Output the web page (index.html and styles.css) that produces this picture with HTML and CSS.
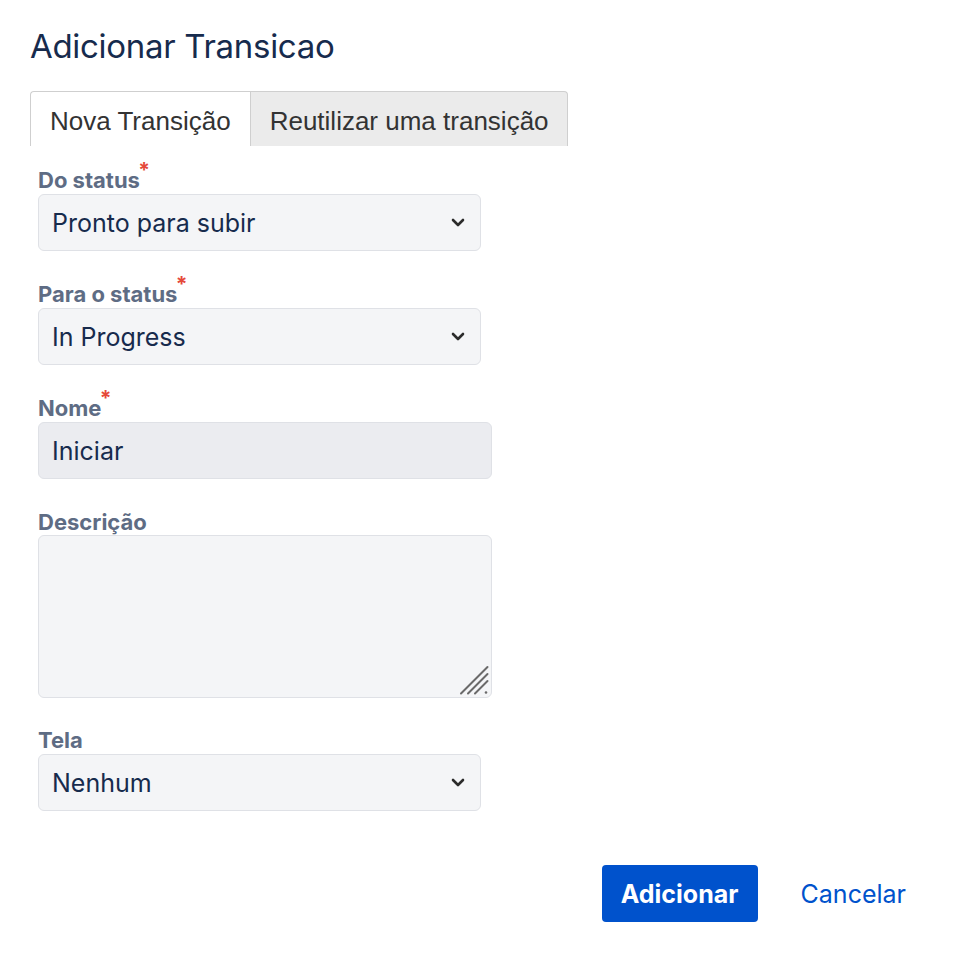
FILE: index.html
```html
<!DOCTYPE html>
<html lang="pt">
<head>
<meta charset="utf-8">
<title>Adicionar Transicao</title>
<link rel="stylesheet" href="styles.css">
</head>
<body>
<div class="dialog">
  <h1 class="title">Adicionar Transicao</h1>
  <div class="tabs">
    <div class="tab active">Nova Transição</div>
    <div class="tab">Reutilizar uma transição</div>
  </div>
  <form class="form">
    <div class="field">
      <label class="label">Do status<span class="req">*</span></label>
      <div class="select-wrap">
        <select class="control select"><option>Pronto para subir</option></select>
        <svg class="chev" width="14" height="9" viewBox="0 0 14 9"><path d="M2 2l5 5 5-5" fill="none" stroke="#2b2b2b" stroke-width="2.6" stroke-linecap="round" stroke-linejoin="round"/></svg>
      </div>
    </div>
    <div class="field">
      <label class="label">Para o status<span class="req">*</span></label>
      <div class="select-wrap">
        <select class="control select"><option>In Progress</option></select>
        <svg class="chev" width="14" height="9" viewBox="0 0 14 9"><path d="M2 2l5 5 5-5" fill="none" stroke="#2b2b2b" stroke-width="2.6" stroke-linecap="round" stroke-linejoin="round"/></svg>
      </div>
    </div>
    <div class="field">
      <label class="label">Nome<span class="req">*</span></label>
      <input class="control input" type="text" value="Iniciar">
    </div>
    <div class="field field-area">
      <label class="label">Descrição</label>
      <div class="textarea-wrap">
        <textarea class="control textarea"></textarea>
        <svg class="grip" width="30" height="30" viewBox="0 0 30 30"><path d="M2 28.5L28.5 2M9 28.5L28.5 9M16 28.5L28.5 16" fill="none" stroke="#6a6a6a" stroke-width="2" stroke-linecap="round"/><circle cx="27" cy="27.5" r="1.3" fill="#6a6a6a"/></svg>
      </div>
    </div>
    <div class="field">
      <label class="label">Tela</label>
      <div class="select-wrap">
        <select class="control select"><option>Nenhum</option></select>
        <svg class="chev" width="14" height="9" viewBox="0 0 14 9"><path d="M2 2l5 5 5-5" fill="none" stroke="#2b2b2b" stroke-width="2.6" stroke-linecap="round" stroke-linejoin="round"/></svg>
      </div>
    </div>
    <div class="footer">
      <button type="button" class="btn primary">Adicionar</button>
      <button type="button" class="btn link">Cancelar</button>
    </div>
  </form>
</div>
</body>
</html>
```
FILE: styles.css
```css
* { box-sizing: border-box; }
html, body { margin: 0; padding: 0; background: #fff; }
body { font-family: Inter, "Noto Sans", sans-serif; color: #172b4d; }

.dialog { padding: 24px 48px 0 30px; }

.title {
  margin: 0;
  font-size: 33px;
  line-height: 44px;
  font-weight: 400;
  color: #172b4d;
  letter-spacing: -0.3px;
}

.tabs {
  display: flex;
  margin-top: 23px;
  height: 55px;
}
.tab {
  font-family: "Liberation Sans", Arial, sans-serif;
  font-size: 26px;
  color: #333;
  padding: 4px 19px 0;
  display: flex;
  align-items: center;
  border: 1px solid #cfcfcf;
  border-bottom: none;
  border-radius: 4px 4px 0 0;
  background: #ebebeb;
}
.tab.active { background: #fff; border-right: none; border-radius: 4px 0 0 0; }
.tab + .tab { border-radius: 0 4px 0 0; padding-right: 18px; }

.form { padding: 20px 0 0 8px; }

.field { display: flex; flex-direction: column; margin-bottom: 29px; }
.field-area { margin-bottom: 28px; }

.label {
  font-size: 22px;
  line-height: 26px;
  font-weight: 700;
  color: #5e6c84;
  margin-bottom: 2px;
  align-self: flex-start;
  position: relative;
  top: 1px;
}
.req {
  color: #e5493a;
  font-size: 21px;
  position: absolute;
  right: -10px;
  top: -9px;
  font-weight: 700;
}

.control {
  font-family: Inter, "Noto Sans", sans-serif;
  font-size: 25px;
  color: #172b4d;
  border: 1px solid #dfe1e6;
  border-radius: 6px;
  background: #f4f5f7;
  outline: none;
  margin: 0;
}

.select-wrap { position: relative; width: 443px; }
.select {
  appearance: none;
  -webkit-appearance: none;
  width: 100%;
  height: 57px;
  padding: 0 40px 0 13px;
}
.chev { position: absolute; right: 16px; top: 24px; pointer-events: none; }

.input {
  width: 454px;
  height: 57px;
  padding: 0 13px;
  background: #ebecf0;
}

.textarea-wrap { position: relative; width: 454px; margin-top: -1px; }
.textarea {
  display: block;
  width: 100%;
  height: 163px;
  resize: none;
  padding: 10px 13px;
}
.grip { position: absolute; right: 3px; bottom: 3px; pointer-events: none; }

.footer {
  display: flex;
  justify-content: flex-end;
  align-items: center;
  gap: 28px;
  margin-top: 54px;
}
.btn {
  font-family: Inter, "Noto Sans", sans-serif;
  font-size: 25px;
  height: 57px;
  border: none;
  cursor: pointer;
  background: none;
  padding: 0 16px;
}
.btn.primary {
  background: #0052cc;
  color: #fff;
  font-weight: 700;
  border-radius: 4px;
  width: 156px;
  padding: 0;
}
.btn.link { color: #0052cc; font-weight: 400; padding: 0 16px 0 15px; }
```
